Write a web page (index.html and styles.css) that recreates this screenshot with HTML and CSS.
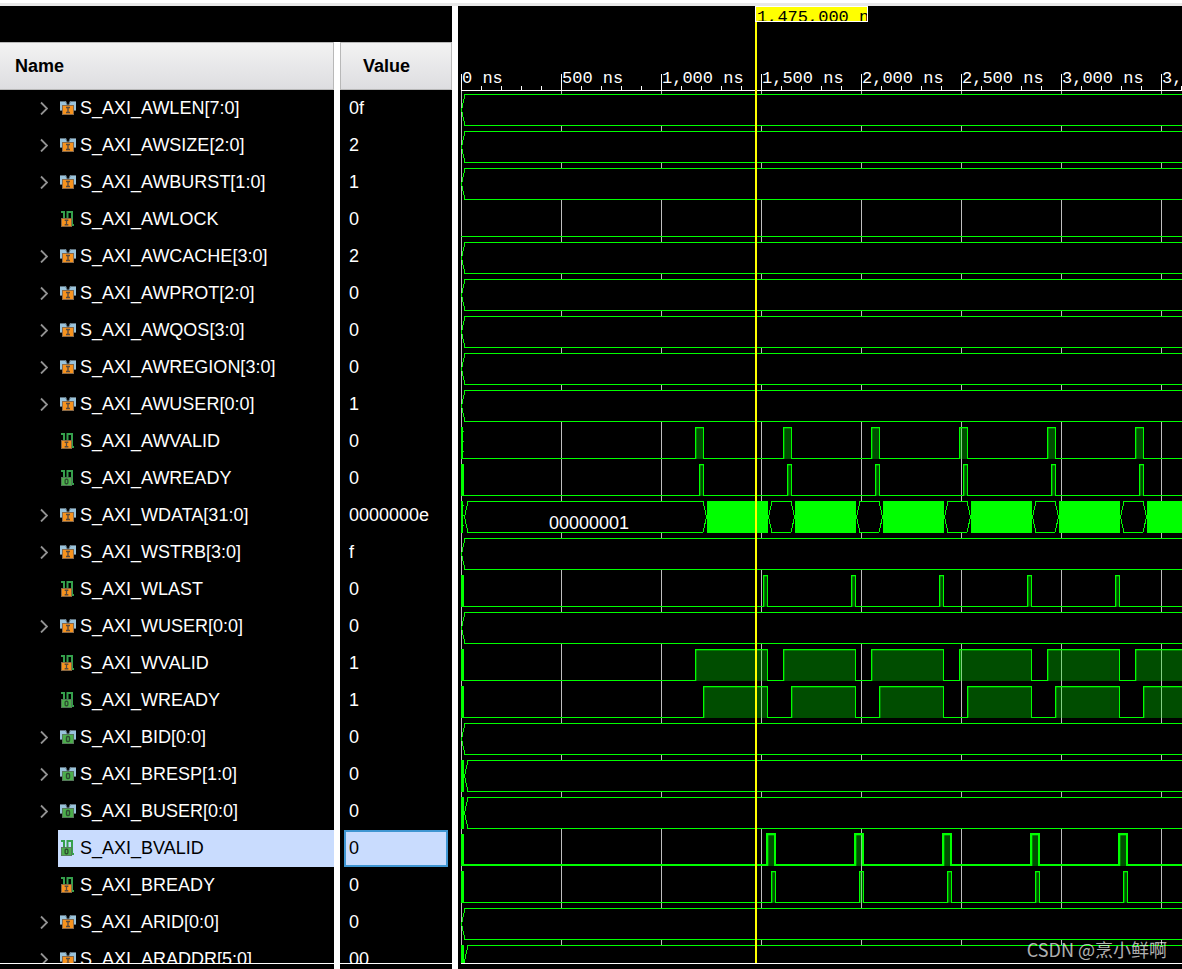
FILE: index.html
```html
<!DOCTYPE html>
<html lang="en">
<head>
<meta charset="utf-8">
<title>Waveform viewer</title>
<link rel="stylesheet" href="styles.css">
</head>
<body>
<svg class="defs" aria-hidden="true">
  <symbol id="chev" viewBox="0 0 8 14"><path d="M1 1.500L7 7.500L1 13.500" fill="none" stroke="#929292" stroke-width="1.800"/></symbol>
  <symbol id="ibox" viewBox="0 0 12 10" preserveAspectRatio="none"><rect x=".5" y=".5" width="11" height="9" fill="#f7931e" stroke="#8a6a48"/><path d="M4 2.500H8M4 7.500H8M6 2.500V7.500" fill="none" stroke="#5a4a3c" stroke-width="1.400"/></symbol>
  <symbol id="obox" viewBox="0 0 12 10" preserveAspectRatio="none"><rect x=".5" y=".5" width="11" height="9" fill="#4cae4c" stroke="#55785a"/><rect x="4.500" y="2.500" width="3" height="5" rx="1.200" fill="none" stroke="#2c4a30" stroke-width="1.400"/></symbol>
  <symbol id="bus" viewBox="0 0 16 14"><path d="M0 0H6L7 4H9L10 0H16V10H0Z" fill="#9ac3db"/><path d="M0 .5H5.500L7.500 4M16 .5H10.500L8.500 4M0 9.500H2M14 9.500H16" fill="none" stroke="#5f727e"/></symbol>
  <symbol id="bit" viewBox="0 0 16 16"><path d="M1 1H4V8M7.500 8V1H12V14H14" fill="none" stroke="#35a04c" stroke-width="2"/></symbol>
  <symbol id="bus-i" viewBox="0 0 16 16"><use href="#bus" y="1" width="16" height="14"/><use href="#ibox" x="2" y="5" width="12" height="10"/></symbol>
  <symbol id="bus-o" viewBox="0 0 16 16"><use href="#bus" y="1" width="16" height="14"/><use href="#obox" x="2" y="5" width="12" height="10"/></symbol>
  <symbol id="bit-i" viewBox="0 0 16 16"><use href="#bit" width="16" height="16"/><use href="#ibox" x="1" y="7" width="11" height="9"/></symbol>
  <symbol id="bit-o" viewBox="0 0 16 16"><use href="#bit" width="16" height="16"/><use href="#obox" x="1" y="7" width="11" height="9"/></symbol>
</svg>
<main class="viewer">
  <section class="signals">
    <div class="scroll">
      <table class="table">
        <colgroup><col class="col-name"><col></colgroup>
        <thead><tr><th class="th-name" scope="col">Name</th><th class="th-value" scope="col">Value</th></tr></thead>
        <tbody id="rows"></tbody>
      </table>
    </div>
    <div class="foot"><div class="foot-name"></div><div class="foot-value"></div></div>
  </section>
  <section class="waves">
    <svg class="plot" id="plot" role="img" aria-label="Signal waveforms"></svg>
    <div class="wave-foot"></div>
    <div class="cursor"></div>
    <div class="cursor-label">1,475,000 n</div>
    <div class="mark">CSDN @烹小鲜啊</div>
  </section>
</main>
<script src="waves.js"></script>
</body>
</html>
```

FILE: styles.css
```css
* { box-sizing: border-box; }
body {
  margin: 0;
  height: 100vh;
  overflow: hidden;
  background: #fff;
  font-family: "Liberation Sans", Arial, sans-serif;
  font-size: 18px;
}
.defs { position: absolute; width: 0; height: 0; }
.viewer {
  display: flex;
  height: 100%;
  padding-top: 6px;
  background: linear-gradient(#fff 3px, #e8e8e8 3px);
}
.signals {
  display: flex;
  flex-direction: column;
  flex: none;
  width: 458px;
  padding-top: 36px;
  border-right: 6px solid #fff;
  background: #000;
  color: #fff;
}
.scroll { flex: 1; min-height: 0; overflow: hidden; }
.table { width: 100%; table-layout: fixed; border-collapse: separate; border-spacing: 0; }
.col-name { width: 340px; }
th {
  height: 48px;
  padding: 0;
  color: #000;
  text-align: left;
  background: linear-gradient(#f3f3f3, #dddde0) padding-box;
}
.th-name { padding-left: 15px; border-right: 6px solid #fff; box-shadow: inset -1px 1px #b8b8b8, inset 0 -1px #b8b8b8; }
.th-value { padding-left: 23px; box-shadow: inset 0 0 0 1px #b8b8b8; }
td { height: 37px; padding: 0; }
.td-name { border-right: 6px solid #fff; }
.cell { display: flex; height: 37px; padding-left: 38px; }
.slot { display: flex; align-items: center; width: 20px; padding-bottom: 1px; }
.toggle { display: flex; padding: 0 2px; border: 0; background: none; }
.chev { width: 8px; height: 14px; }
.label { display: flex; flex: 1; align-items: center; gap: 4px; padding-left: 2px; white-space: nowrap; }
.icon { width: 16px; height: 16px; margin-bottom: 1px; }
.value { height: 37px; margin: 0 4px; padding-left: 3px; border: 2px solid transparent; line-height: 33px; }
.selected .label { background: #c9dcfe; color: #000; }
.selected .value { background: #c9dcfe; border-color: #3f96d2; color: #000; }
.foot { display: flex; height: 6px; }
.foot-name { width: 340px; border-top: 1px solid #fff; border-right: 6px solid #fff; }
.foot-value { flex: 1; border-top: 1px solid #fff; }

.waves {
  position: relative;
  display: flex;
  flex-direction: column;
  flex: 1;
  min-width: 0;
  padding-left: 3px;
  overflow: hidden;
  background: #000;
}
.plot { display: block; flex: 1; width: 100%; min-height: 0; overflow: hidden; shape-rendering: crispEdges; }
.wave-foot { height: 6px; border-top: 1px solid #fff; }
.grid { fill: #bebebe; }
.ruler { fill: #fff; }
.ruler-text { fill: #fff; font: 17px "Liberation Mono", monospace; }
.bus-text { fill: #fff; font: 18px "Liberation Sans", sans-serif; }
.hex { fill: #000; stroke: #0f0; stroke-width: 1; }
.solid { fill: #0f0; }
.line { fill: none; stroke: #0f0; stroke-width: 1; }
.line-strong { fill: none; stroke: #0f0; stroke-width: 2; }
.high { fill: rgba(0, 255, 0, .3); }
.cursor { position: absolute; left: 297px; top: 0; bottom: 6px; width: 2px; background: #ff0; }
.cursor-label {
  position: absolute;
  left: 297px;
  top: 0;
  width: 113px;
  height: 16px;
  padding: 1px 0 0 1px;
  overflow: hidden;
  border: 1px solid #fff;
  background: #ff0;
  color: #000;
  font: 17px/20px "Liberation Mono", monospace;
  white-space: nowrap;
}
.mark {
  position: absolute;
  right: 15px;
  bottom: 7px;
  color: rgba(255, 255, 255, .7);
  font: 18px/26px "Noto Sans CJK SC", sans-serif;
  white-space: nowrap;
}
```

FILE: waves.js
```js
// x positions are in plot pixels, 5 ns each; pulses repeat every PERIOD pixels.
const PERIOD = 88, ROW = 37, RULER = 84;
const plot = document.getElementById("plot");
const signals = [
  ["AWLEN[7:0]", "0f", "i"],
  ["AWSIZE[2:0]", "2", "i"],
  ["AWBURST[1:0]", "1", "i"],
  ["AWLOCK", "0", "i", {}],
  ["AWCACHE[3:0]", "2", "i"],
  ["AWPROT[2:0]", "0", "i"],
  ["AWQOS[3:0]", "0", "i"],
  ["AWREGION[3:0]", "0", "i"],
  ["AWUSER[0:0]", "1", "i"],
  ["AWVALID", "0", "i", { init: 2, rise: 234, fall: 242 }],
  ["AWREADY", "0", "o", { init: 3, rise: 238, fall: 242 }],
  ["WDATA[31:0]", "0000000e", "i", { init: 2, data: true }],
  ["WSTRB[3:0]", "f", "i"],
  ["WLAST", "0", "i", { init: 3, rise: 302, fall: 306 }],
  ["WUSER[0:0]", "0", "i"],
  ["WVALID", "1", "i", { init: 3, rise: 234, fall: 306 }],
  ["WREADY", "1", "o", { init: 3, rise: 242, fall: 306 }],
  ["BID[0:0]", "0", "o"],
  ["BRESP[1:0]", "0", "o", { init: 3 }],
  ["BUSER[0:0]", "0", "o", { init: 3 }],
  ["BVALID", "0", "o", { init: 3, rise: 305, fall: 313, selected: true }],
  ["BREADY", "0", "i", { init: 3, rise: 310, fall: 314 }],
  ["ARID[0:0]", "0", "i"],
  ["ARADDR[5:0]", "00", "i", { init: 3 }]
];

document.getElementById("rows").innerHTML = signals.map(([name, value, dir, w = {}]) => {
  const bus = name.includes("[");
  const toggle = bus ? `<button class="toggle" type="button" aria-label="Expand S_AXI_${name}"><svg class="chev"><use href="#chev"/></svg></button>` : "";
  return `<tr class="${w.selected ? "selected" : ""}"><td class="td-name"><div class="cell"><div class="slot">${toggle}</div>` +
    `<div class="label"><svg class="icon"><use href="#${bus ? "bus" : "bit"}-${dir}"/></svg><span>S_AXI_${name}</span></div></div></td>` +
    `<td><div class="value">${value}</div></td></tr>`;
}).join("");

const rect = (c, x, y, w, h) => `<rect class="${c}" x="${x}" y="${y}" width="${w}" height="${h}"/>`;
const hex = (a, b, y) =>
  `<path class="hex" d="M${a + .5} ${y + 16}L${a + 4} ${y + .5}H${b - 4}L${b - .5} ${y + 16}L${b - 4} ${y + 31.5}H${a + 4}Z"/>`;

function draw() {
  const view = plot.clientWidth || plot.getBoundingClientRect().width;
  const end = view + PERIOD;
  let out = "";

  for (let x = 0; x < view; x += 100) out += rect("grid", x, RULER, 1, 2000);
  out += rect("ruler", 0, RULER, end, 1);
  for (let x = 0; x < view; x += 20) {
    const major = x % 100 === 0;
    out += rect("ruler", x, major ? 68 : 80, 1, major ? 17 : 5);
    if (major) out += `<text class="ruler-text" x="${x + 1}" y="77">${(x * 5).toLocaleString("en-US")} ns</text>`;
  }

  signals.forEach(([name, , , w = {}], i) => {
    const y = RULER + ROW * i + 4;
    const start = w.init === 3 ? 3 : 0;
    if (w.data) {
      out += hex(3, 246, y);
      out += `<text class="bus-text" x="88" y="${y + 28}">00000001</text>`;
      for (let x = 246; x < end; x += PERIOD) out += rect("solid", x, y, 61, 32) + hex(x + 61, x + PERIOD, y);
    } else if (name.includes("[")) {
      out += hex(start, end, y);
    } else {
      const s = w.selected ? 2 : 1;
      const top = s === 2 ? y : y + .5, low = s === 2 ? y + 31 : y + 31.5, off = s === 2 ? 1 : .5;
      let d = `M0 ${low}`;
      if (w.rise) {
        for (let x = 0; w.rise + x < end; x += PERIOD) {
          const a = w.rise + x, b = w.fall + x;
          out += rect("high", a + s, y + 1, b - a - s, 31) + rect("high", a + s, y + 1, 1, 31) + rect("high", a + s, y + 1, b - a - s, 1);
          d += `H${a + off}V${top}H${b + off}V${low}`;
        }
      }
      out += `<path class="${s === 2 ? "line-strong" : "line"}" d="${d}H${end + PERIOD}"/>`;
    }
    if (w.init) out += rect("solid", 0, y, w.init, 32);
    if (w.init === 2) for (const t of [4, 14, 24]) out += rect("solid", 2, y + t, 1, 1);
  });
  plot.innerHTML = out;
}
draw();
window.addEventListener("resize", draw);
```
